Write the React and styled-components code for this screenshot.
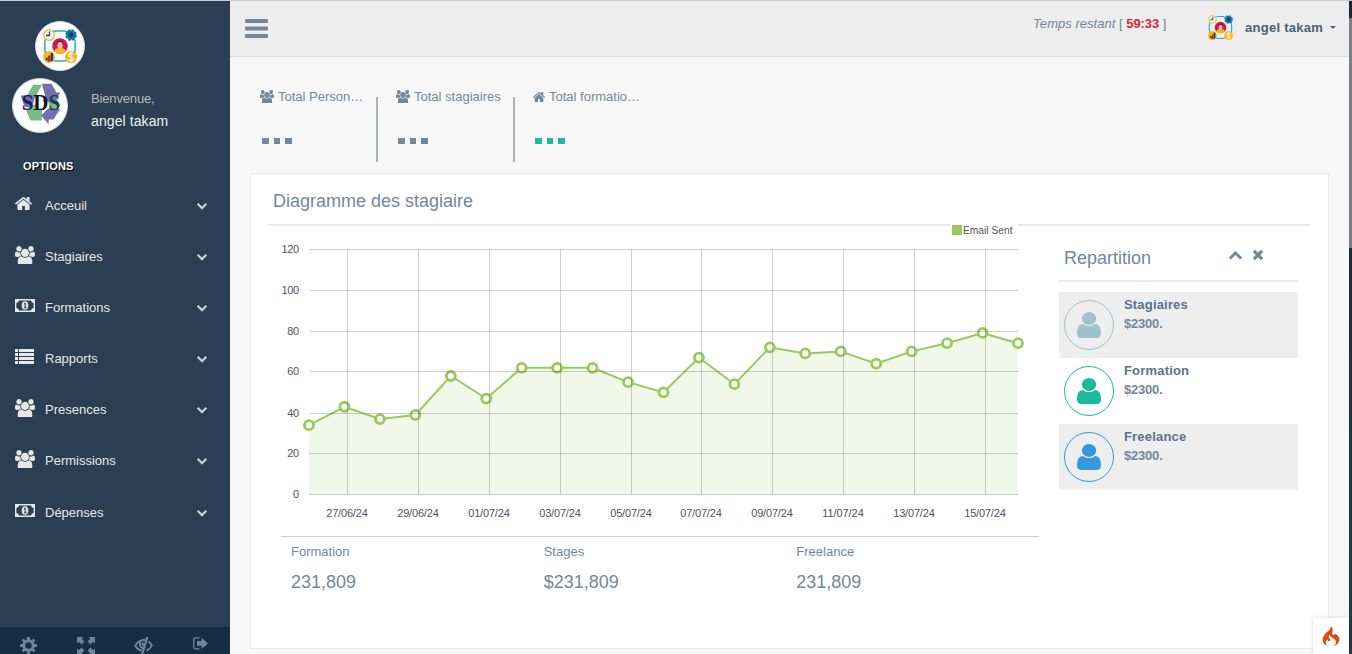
import React from 'react';
import styled, { createGlobalStyle } from 'styled-components';
import { SiCodeigniter } from 'react-icons/si';

const Global = createGlobalStyle`
  * { box-sizing: border-box; }
  body {
    margin: 0; height: 654px; overflow: hidden; background: #f7f7f7;
    font-family: "Liberation Sans", Arial, sans-serif; font-size: 13px; line-height: 19px; color: #73879c;
  }
`;

/* ---------- icons ---------- */
const Svg = styled.svg`
  display: block; flex: none; fill: currentColor;
  width: ${p => p.$w}px; height: ${p => p.$h || p.$w}px;
`;
const UsersIcon = ({ w, h }) => (
  <Svg $w={w} $h={h} viewBox="-64 0 1920 1672" preserveAspectRatio="none">
    <path d="M529 896q-162 5-265 128h-134q-82 0-138-40.5t-56-118.5q0-353 124-353 6 0 43.5 21t97.5 42.5 119 21.5q67 0 133-23-5 37-5 66 0 139 81 256zm1071 637q0 120-73 189.5t-194 69.5h-874q-121 0-194-69.5t-73-189.5q0-53 3.5-103.5t14-109 26.5-108.5 43-97.5 62-81 85.5-53.5 111.5-20q10 0 43 21.5t73 48 107 48 135 21.5 135-21.5 107-48 73-48 43-21.5q61 0 111.5 20t85.5 53.5 62 81 43 97.5 26.5 108.5 14 109 3.5 103.5zm-1024-1277q0 106-75 181t-181 75-181-75-75-181 75-181 181-75 181 75 75 181zm704 384q0 159-112.5 271.5t-271.5 112.5-271.5-112.5-112.5-271.5 112.5-271.5 271.5-112.5 271.5 112.5 112.5 271.5zm576 225q0 78-56 118.5t-138 40.5h-134q-103-123-265-128 81-117 81-256 0-29-5-66 66 23 133 23 59 0 119-21.5t97.5-42.5 43.5-21q124 0 124 353zm-128-609q0 106-75 181t-181 75-181-75-75-181 75-181 181-75 181 75 75 181z" />
  </Svg>
);
const HomeIcon = ({ w, h }) => (
  <Svg $w={w} $h={h} viewBox="90 250 1612 1290" preserveAspectRatio="none">
    <path d="M1472 992v480q0 26-19 45t-45 19h-384v-384h-256v384h-384q-26 0-45-19t-19-45v-480q0-1 .5-3t.5-3l575-474 575 474q1 2 1 6zm223-69l-62 74q-8 9-21 11h-3q-13 0-21-7l-692-577-692 577q-12 8-24 7-13-2-21-11l-62-74q-8-10-7-23.5t11-21.5l719-599q32-26 76-26t76 26l244 204v-195q0-14 9-23t23-9h192q14 0 23 9t9 23v408l219 182q10 8 11 21.5t-7 23.5z" />
  </Svg>
);
const MoneyIcon = () => (
  <Svg $w={20} $h={13} viewBox="0 0 20 13">
    <path fillRule="evenodd" d="M0 0h20v13H0zM4 1.4A2.8 2.8 0 0 1 1.4 4v5A2.8 2.8 0 0 1 4 11.6h12A2.8 2.8 0 0 1 18.6 9V4A2.8 2.8 0 0 1 16 1.4z" />
    <ellipse cx="10" cy="6.5" rx="3.3" ry="4.3" />
    <path d="M8.8 4.6l1-.8h.9v4.5h.8v.9H8.8v-.9h.8V5.1l-.8.3z" fill="#2a3f54" />
  </Svg>
);
const ListIcon = () => (
  <Svg $w={19} $h={15} viewBox="0 0 19 15">
    <path d="M0 0h3v3H0zM4 0h15v3H4zM0 4h3v3H0zM4 4h15v3H4zM0 8h3v3H0zM4 8h15v3H4zM0 12h3v3H0zM4 12h15v3H4z" />
  </Svg>
);
const ChevronIcon = ({ w, up }) => (
  <Svg $w={w} $h={w * 0.66} viewBox="90 530 1612 1040">
    <path transform={up ? 'rotate(180 896 1050)' : undefined} d="M1683 808l-742 741q-19 19-45 19t-45-19l-742-741q-19-19-19-45.5t19-45.5l166-165q19-19 45-19t45 19l531 531 531-531q19-19 45-19t45 19l166 165q19 19 19 45.5t-19 45.5z" />
  </Svg>
);
const CloseIcon = () => (
  <Svg $w={10} viewBox="302 366 1188 1188">
    <path d="M1490 1322q0 40-28 68l-136 136q-28 28-68 28t-68-28l-294-294-294 294q-28 28-68 28t-68-28l-136-136q-28-28-28-68t28-68l294-294-294-294q-28-28-28-68t28-68l136-136q28-28 68-28t68 28l294 294 294-294q28-28 68-28t68 28l136 136q28 28 28 68t-28 68l-294 294 294 294q28 28 28 68z" />
  </Svg>
);
const UserIcon = () => (
  <Svg $w={24} $h={26} viewBox="256 128 1280 1536" preserveAspectRatio="none">
    <path d="M1536 1399q0 109-62.5 187t-150.5 78h-854q-88 0-150.5-78t-62.5-187q0-85 8.500-160.500t31.500-152 58.500-131 94-89 134.500-34.500q131 128 313 128t313-128q76 0 134.500 34.500t94 89 58.500 131 31.500 152 8.500 160.500zm-256-887q0 159-112.500 271.500t-271.500 112.500-271.500-112.500-112.500-271.500 112.500-271.500 271.500-112.500 271.500 112.500 112.500 271.500z" />
  </Svg>
);
const BarsIcon = () => (
  <Svg $w={23} $h={20} viewBox="0 0 23 20">
    <rect y="0" width="23" height="4" rx="1" /><rect y="7.500" width="23" height="4" rx="1" /><rect y="15" width="23" height="4" rx="1" />
  </Svg>
);
const CogIcon = () => (
  <Svg $w={17} viewBox="0 0 17 17">
    <circle cx="8.500" cy="8.500" r="4.700" fill="none" stroke="currentColor" strokeWidth="3" />
    {[0, 45, 90, 135, 180, 225, 270, 315].map(a => (
      <path key={a} transform={`rotate(${a} 8.500 8.500)`} d="M6.800 3L7.300 0h2.400l.5 3z" />
    ))}
  </Svg>
);
const ExpandIcon = () => (
  <Svg $w={18} viewBox="0 0 18 18">
    {['', 'matrix(-1 0 0 1 18 0)', 'matrix(1 0 0 -1 0 18)', 'rotate(180 9 9)'].map(t => (
      <path key={t} transform={t || undefined} d="M0 0h6.500L4.700 1.800 7.400 4.600 4.600 7.400 1.800 4.700 0 6.500z" />
    ))}
  </Svg>
);
const EyeOffIcon = () => (
  <Svg $w={19} $h={17} viewBox="0 0 19 17">
    <g fill="none" stroke="currentColor" strokeWidth="1.900">
      <path d="M11.500 2.800Q4.500 3 1.200 8.700q2.600 4.200 6.500 5.200" />
      <path d="M14.500 4.500q2 1.400 3.300 4-1.500 3.500-5.300 5" />
      <path d="M6.300 5.200q-1.600 4.300 2.700 6.300M9 5.500q-.8 2.500.5 3.300" />
      <path d="M13.400 0L8.200 17" strokeWidth="2.200" />
    </g>
  </Svg>
);
const LogoutIcon = () => (
  <Svg $w={15} $h={13} viewBox="0 0 15 13">
    <path d="M6.500.8H2.400Q.8.800.8 2.400v7.900q0 1.600 1.600 1.600h4.100" fill="none" stroke="currentColor" strokeWidth="1.300" />
    <path d="M4 4h4.700V.8L15 6.400l-6.300 5.600V8.800H4z" />
  </Svg>
);
const NetworkLogo = ({ w }) => (
  <Svg $w={w} viewBox="0 0 34 34">
    <rect x="1.800" y="2" width="30.400" height="30" rx="12" fill="none" stroke="#2aa9c9" strokeWidth="1.500" />
    <circle cx="17" cy="17" r="7.800" fill="#d5145b" />
    <path d="M11.300 22.300q.5-3.300 5.700-3.300t5.700 3.300Q20 24.800 17 24.800t-5.700-2.500z" fill="#fdb713" />
    <path d="M14 16v-2.500q.2-2 3-2t3 2V16z" fill="#7a1438" />
    <ellipse cx="17" cy="16.500" rx="2.600" ry="3.400" fill="#fbc9a0" />
    <circle cx="6" cy="6" r="5.300" fill="#f1f4f5" stroke="#fdb713" strokeWidth="1.300" />
    <path d="M6.500 2.500v4H3" fill="none" stroke="#07486e" strokeWidth="1.300" />
    <circle cx="28" cy="6" r="4.800" fill="#087aa5" stroke="#087aa5" strokeWidth="2" strokeDasharray="2.500 1.270" />
    <circle cx="28" cy="6" r="2.400" fill="#043f62" />
    <circle cx="6" cy="28" r="6" fill="#fdb713" />
    <path d="M2.800 28.700h2v3.300q-1.400-.5-2-1.600z" fill="#07486e" /><path d="M5 26.700h2.400v6H5z" fill="#d5145b" /><path d="M7.600 24h2.400v7.500l-2.400 1z" fill="#07486e" />
    <circle cx="28" cy="28" r="6" fill="#fdb713" />
    <path d="M30.500 25.700q-.8-1.200-2.500-1.200-2.400 0-2.400 1.700 0 1.300 2.400 1.800t2.500 1.900q0 1.600-2.500 1.600-1.800 0-2.600-1.300M28 23v10" fill="none" stroke="#fff" strokeWidth="1.100" />
  </Svg>
);

/* ---------- sidebar ---------- */
const Page = styled.div`
  display: flex; height: 654px; width: 1352px; position: relative; overflow: hidden;
  &::before { content: ""; position: absolute; inset: 0 0 auto; height: 1px; background: #c9cccb; z-index: 2; }
`;
const Sidebar = styled.aside`width: 230px; background: #2a3f54; display: flex; flex-direction: column; color: #e7e7e7;`;
const Brand = styled.div`
  width: 50px; height: 50px; margin: 21px 0 0 35px; border-radius: 50%; background: #fff;
  border: 1px solid #d4d9dd; display: flex; align-items: center; justify-content: center;
`;
const Profile = styled.div`display: flex; margin: 7px 0 0 12px; height: 55px;`;
const Avatar = styled.svg`width: 56px; height: 55px; border-radius: 50%; background: #fff; border: 1px solid #cfd5da; flex: none;`;
const Welcome = styled.div`
  padding: 11px 0 0 23px; color: #bab8b8; line-height: 19px; letter-spacing: -.15px;
  strong { display: block; margin-top: 4px; font-weight: 400; font-size: 14px; color: #ecf0f1; letter-spacing: .1px; }
`;
const Section = styled.h3`
  margin: 26px 0 0 23px; font-size: 11px; line-height: 14px; letter-spacing: .15px; color: #fff;
  text-shadow: 1px 1px #000; text-transform: uppercase;
`;
const Nav = styled.nav`margin-top: 7px; flex: 1; display: flex; flex-direction: column;`;
const NavItem = styled.a`
  height: 51px; padding: 0 23px 0 15px; display: flex; align-items: center;
  &:last-child { margin-top: 1px; }
`;
const NavIcon = styled.span`
  width: 30px; height: 26px; display: flex; align-items: ${p => (p.$low ? 'center' : 'flex-start')};
  padding: ${p => (p.$low ? '0 0 4px' : '2px 0 0')};
`;
const NavLabel = styled.span`flex: 1;`;
const NavArrow = styled.span`padding-top: 2px; color: #c4cfda;`;
const SideFooter = styled.div`height: 27px; background: #172d44; display: flex; color: #70859b;`;
const FootButton = styled.span`width: 57.5px; padding-top: 10px; display: flex; justify-content: center; &:last-child { padding-right: 2px; }`;

/* ---------- header ---------- */
const Main = styled.main`width: 1119px; display: flex; flex-direction: column;`;
const Topbar = styled.header`
  height: 57px; flex: none; background: #ededed; border-bottom: 1px solid #d9dee4;
  display: flex; padding: 0 13px 0 15px;
`;
const MenuToggle = styled.span`padding-top: 19px; color: #73879c; flex: 1;`;
const Timer = styled.div`
  padding-top: 14px; width: 175px; font-size: 13px; white-space: nowrap; letter-spacing: .03px;
  b { color: #e0243d; letter-spacing: -.1px; }
`;
const Account = styled.div`
  display: flex; gap: 12px; padding-top: 15px; height: 45px; font-weight: 700; color: #515e73;
  span { line-height: 25px; letter-spacing: .25px; }
`;
const Caret = styled.i`width: 6px; height: 0; border: 3px solid transparent; border-top-color: #515e73; border-bottom: 0; margin: 11px 0 0 -5px;`;

/* ---------- tiles ---------- */
const Tiles = styled.section`display: flex; margin: 30px 0 0 20px; height: 75px;`;
const Tile = styled.div`
  width: ${p => p.$w}px; padding-left: 10px; position: relative;
  ${p => p.$line && '&::after { content: ""; position: absolute; right: 8px; top: 10px; height: 65px; width: 2px; background: #adb2b5; }'}
`;
const TileLabel = styled.div`display: flex; align-items: center; gap: 4px; height: 19px; white-space: nowrap;`;
const Dots = styled.div`
  display: flex; gap: 5px; margin: 32px 0 0 2px; color: ${p => p.$color};
  i { width: 6.500px; height: 6px; background: currentColor; }
`;

/* ---------- panel ---------- */
const Panel = styled.section`
  margin: 11px 20px 0 20px; width: 1079px; height: 476px; background: #fff; border: 1px solid #e6e9ed; padding: 0 17px;
`;
const PanelTitle = styled.h2`margin: 0; height: 52px; padding: 16px 5px 0; line-height: 22px; font-size: 18px; font-weight: 400; border-bottom: 2px solid #e6e9ed;`;
const Columns = styled.div`display: flex;`;
const ChartColumn = styled.div`width: 791px; padding-left: 13px;`;
const Plot = styled.svg`
  display: block; width: 758px; height: 310px; overflow: visible;
  text { font-family: "Liberation Sans", Arial, sans-serif; font-size: 11px; fill: #545454; }
`;
const Summary = styled.div`width: 758px; border-top: 1px solid #ccc; display: flex; padding: 5px 0 0 10px;`;
const SummaryItem = styled.div`
  width: 252.660px; flex: none;
  &:last-child { width: 200px; }
  strong { display: block; margin-top: 10px; font-size: 18px; line-height: 22px; font-weight: 400; }
`;
const Side = styled.div`width: 239px;`;
const SideHead = styled.div`
  height: 56px; border-bottom: 2px solid #e6e9ed; margin-bottom: 10px; padding: 0 35px 0 5px; display: flex;
  h2 { margin: 0; padding-top: 21px; font-size: 18px; line-height: 22px; font-weight: 400; flex: 1; }
`;
const Tools = styled.span`display: flex; gap: 11px; padding-top: 24px; align-items: flex-start; svg:first-child { margin-top: 1px; }`;
const Entry = styled.article`
  height: 66px; padding: 8px 5px; display: flex; gap: 10px; background: ${p => (p.$odd ? '#eee' : '#fff')};
`;
const Ring = styled.span`
  width: 50px; height: 50px; border: 1px solid ${p => p.$color}; color: ${p => p.$color};
  border-radius: 50%; display: flex; align-items: center; justify-content: center;
`;
const EntryText = styled.div`
  margin-top: -5px; font-weight: 700; color: #73879c; line-height: 19px;
  b { display: block; color: #5a738e; letter-spacing: .18px; }
  span { display: block; letter-spacing: -.2px; }
`;
const Rail = styled.div`
  width: 3px; height: 654px; background: linear-gradient(#1a2836 0 18px, #75808b 18px 248px, #1a2c44 248px, #243a4c);
`;
const DebugBadge = styled.div`
  position: absolute; right: 3px; bottom: 0; width: 36px; height: 36px; background: #fff;
  box-shadow: 0 0 4px rgba(0,0,0,.15); color: #dd4814; display: flex; align-items: center; justify-content: center; font-size: 20px;
`;

const NAV = [
  ['Acceuil', <HomeIcon w={17} h={13} />, true],
  ['Stagiaires', <UsersIcon w={20} h={18} />],
  ['Formations', <MoneyIcon />, true],
  ['Rapports', <ListIcon />, true],
  ['Presences', <UsersIcon w={20} h={18} />],
  ['Permissions', <UsersIcon w={20} h={18} />],
  ['Dépenses', <MoneyIcon />, true],
];
const VALUES = [34, 43, 37, 39, 58, 47, 62, 62, 62, 55, 50, 67, 54, 72, 69, 70, 64, 70, 74, 79, 74];
const DATES = ['27/06/24', '29/06/24', '01/07/24', '03/07/24', '05/07/24', '07/07/24', '09/07/24', '11/07/24', '13/07/24', '15/07/24'];
const ENTRIES = [['Stagiaires', '#9cc2cb'], ['Formation', '#1abb9c'], ['Freelance', '#3498db']];

function Chart() {
  const pts = VALUES.map((v, i) => [28 + i * 35.45, 268.9 - v * 2.05]);
  const line = pts.map(p => p.join(',')).join(' ');
  return (
    <Plot viewBox="0 0 758 310">
      <polygon points={`28,268.500 ${line} 737,268.500`} fill="#96ca59" fillOpacity=".13" />
      <polyline points={line} fill="none" stroke="#96ca59" strokeWidth="2" />
      <g fill="#fff" stroke="#96ca59" strokeWidth="2.800">
        {pts.map(([x, y], i) => <circle key={i} cx={x} cy={y} r="4.500" />)}
      </g>
      {[23, 64, 105, 145, 187, 227, 268].map((y, i) => (
        <g key={y}>
          <path d={`M28 ${y + 0.5}H737`} stroke="#545454" strokeOpacity=".28" />
          <text x="18" y={y + 4} textAnchor="end" textLength={i < 2 ? 17.5 : i < 6 ? 11.8 : undefined}>{120 - i * 20}</text>
        </g>
      ))}
      {DATES.map((d, i) => {
        const x = Math.round(66 + i * 70.89);
        return (
          <g key={d}>
            <path d={`M${x + 0.5} 23V268`} stroke="#545454" strokeOpacity=".28" />
            <text x={x} y="291" textAnchor="middle" textLength="41.500">{d}</text>
          </g>
        );
      })}
      <rect x="670" y="-3" width="67" height="14" fill="#fff" />
      <rect x="671" y="-1" width="10" height="10" fill="#96ca59" />
      <text x="682" y="8" textLength="49.500" lengthAdjust="spacingAndGlyphs">Email Sent</text>
    </Plot>
  );
}

export default function App() {
  return (
    <Page>
      <Global />
      <Sidebar>
        <Brand><NetworkLogo w={34} /></Brand>
        <Profile>
          <Avatar viewBox="0 0 56 55">
            <g fill="#79bd80"><path d="M21 6h9l-8 15-8-3z" /><path d="M16 29l8-3-2 6h8v11H18l-4-9z" /><path d="M36 22l9-3 4 9-10 5z" /></g>
            <g fill="#7471b0"><path d="M30 5h10l5 9h4l-6 10-13-1 4-3z" /><path d="M8 17h15l-3 12H12z" /><path d="M37 31h12l-7 11h-5v5l-8-9 8-8z" /></g>
            <text x="9" y="32.500" textLength="40" lengthAdjust="spacingAndGlyphs" fontFamily="Liberation Serif, serif" fontWeight="700" fontSize="24" fill="#1b1d63">S<tspan fill="#11112b">D</tspan><tspan fill="#173f4a">S</tspan></text>
          </Avatar>
          <Welcome>Bienvenue,<strong>angel takam</strong></Welcome>
        </Profile>
        <Section>Options</Section>
        <Nav>
          {NAV.map(([label, icon, low]) => (
            <NavItem key={label}>
              <NavIcon $low={low}>{icon}</NavIcon>
              <NavLabel>{label}</NavLabel>
              <NavArrow><ChevronIcon w={10} /></NavArrow>
            </NavItem>
          ))}
        </Nav>
        <SideFooter>
          <FootButton><CogIcon /></FootButton>
          <FootButton><ExpandIcon /></FootButton>
          <FootButton><EyeOffIcon /></FootButton>
          <FootButton><LogoutIcon /></FootButton>
        </SideFooter>
      </Sidebar>
      <Main>
        <Topbar>
          <MenuToggle><BarsIcon /></MenuToggle>
          <Timer><em>Temps restant</em> [ <b>59:33</b> ]</Timer>
          <Account><NetworkLogo w={25} /><span>angel takam</span><Caret /></Account>
        </Topbar>
        <Tiles>
          <Tile $w={136} $line><TileLabel><UsersIcon w={14} h={13} />Total Person…</TileLabel><Dots $color="#73879c"><i /><i /><i /></Dots></Tile>
          <Tile $w={137} $line><TileLabel><UsersIcon w={14} h={13} />Total stagiaires</TileLabel><Dots $color="#73879c"><i /><i /><i /></Dots></Tile>
          <Tile $w={137}><TileLabel><HomeIcon w={12} h={10} />Total formatio…</TileLabel><Dots $color="#1abb9c"><i /><i /><i /></Dots></Tile>
        </Tiles>
        <Panel>
          <PanelTitle>Diagramme des stagiaire</PanelTitle>
          <Columns>
            <ChartColumn>
              <Chart />
              <Summary>
                <SummaryItem>Formation<strong>231,809</strong></SummaryItem>
                <SummaryItem>Stages<strong>$231,809</strong></SummaryItem>
                <SummaryItem>Freelance<strong>231,809</strong></SummaryItem>
              </Summary>
            </ChartColumn>
            <Side>
              <SideHead><h2>Repartition</h2><Tools><ChevronIcon w={13} up /><CloseIcon /></Tools></SideHead>
              {ENTRIES.map(([name, color], i) => (
                <Entry key={name} $odd={i % 2 === 0}>
                  <Ring $color={color}><UserIcon /></Ring>
                  <EntryText><b>{name}</b><span>$2300.</span></EntryText>
                </Entry>
              ))}
            </Side>
          </Columns>
        </Panel>
      </Main>
      <Rail />
      <DebugBadge><SiCodeigniter /></DebugBadge>
    </Page>
  );
}
